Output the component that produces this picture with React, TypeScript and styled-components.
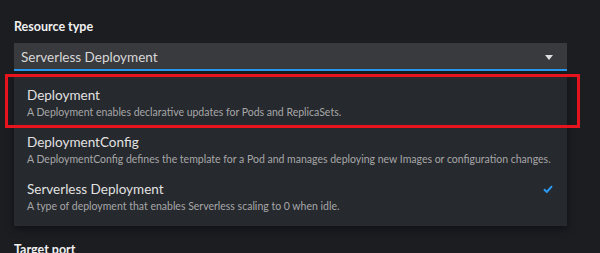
import React from 'react'
import styled, { createGlobalStyle } from 'styled-components'

const GlobalStyle = createGlobalStyle`
  html, body {
    margin: 0;
    padding: 0;
    background: #1b1d21;
    font-family: Lato, 'Open Sans', 'Liberation Sans', sans-serif;
    overflow: hidden;
  }
`

const Page = styled.div`
  position: relative;
  width: 600px;
  height: 253px;
  padding: 18px 33px 0 14px;
  box-sizing: border-box;
  display: flex;
  flex-direction: column;
  & > * {
    flex-shrink: 0;
  }
`

const Label = styled.div`
  font-size: 12.5px;
  font-weight: 700;
  color: #f0f0f0;
  line-height: 18px;
  margin-bottom: 7px;
`

const SelectToggle = styled.div`
  height: 28px;
  box-sizing: border-box;
  background: #393a3e;
  border-bottom: 2px solid #2b9af3;
  display: flex;
  align-items: center;
  justify-content: space-between;
  padding: 2px 14px 0 7px;
  font-size: 13.5px;
  color: #d8d8d8;
`

const Caret = styled.span`
  width: 0;
  height: 0;
  border-left: 4px solid transparent;
  border-right: 4px solid transparent;
  border-top: 5px solid #e0e0e0;
`

const Menu = styled.ul`
  list-style: none;
  margin: 3px 0 0;
  padding: 6px 0 5px;
  background: #26292d;
  box-shadow: 0 3px 8px rgba(0, 0, 0, 0.45);
`

const Item = styled.li`
  height: 47px;
  box-sizing: border-box;
  padding: 6px 13px;
  display: flex;
  justify-content: space-between;
  align-items: flex-start;
`

const Texts = styled.div`
  display: flex;
  flex-direction: column;
  white-space: nowrap;
`

const Title = styled.div`
  font-size: 13.5px;
  line-height: 18px;
  color: #e2e2e2;
`

const Desc = styled.div`
  font-size: 10.5px;
  line-height: 17px;
  color: #a6a7a9;
`

const Check = styled.svg`
  margin-top: 5px;
  margin-right: 1px;
`

const NextLabel = styled(Label)`
  margin-top: 15px;
`

const Highlight = styled.div`
  position: absolute;
  left: 5px;
  top: 74px;
  width: 575px;
  height: 54px;
  border: 3px solid #e8141d;
  box-sizing: border-box;
  pointer-events: none;
`

const options = [
  {
    title: 'Deployment',
    desc: 'A Deployment enables declarative updates for Pods and ReplicaSets.',
  },
  {
    title: 'DeploymentConfig',
    desc: 'A DeploymentConfig defines the template for a Pod and manages deploying new Images or configuration changes.',
  },
  {
    title: 'Serverless Deployment',
    desc: 'A type of deployment that enables Serverless scaling to 0 when idle.',
    selected: true,
  },
]

export default function App() {
  return (
    <>
      <GlobalStyle />
      <Page>
        <Label>Resource type</Label>
        <SelectToggle>
          <span>Serverless Deployment</span>
          <Caret />
        </SelectToggle>
        <Menu>
          {options.map((o) => (
            <Item key={o.title}>
              <Texts>
                <Title>{o.title}</Title>
                <Desc>{o.desc}</Desc>
              </Texts>
              {o.selected && (
                <Check width="10" height="8" viewBox="0 0 10 8">
                  <path d="M1 4.2 L3.8 7 L9 1.2" stroke="#2b9af3" strokeWidth="2" fill="none" />
                </Check>
              )}
            </Item>
          ))}
        </Menu>
        <NextLabel>Target port</NextLabel>
        <Highlight />
      </Page>
    </>
  )
}
